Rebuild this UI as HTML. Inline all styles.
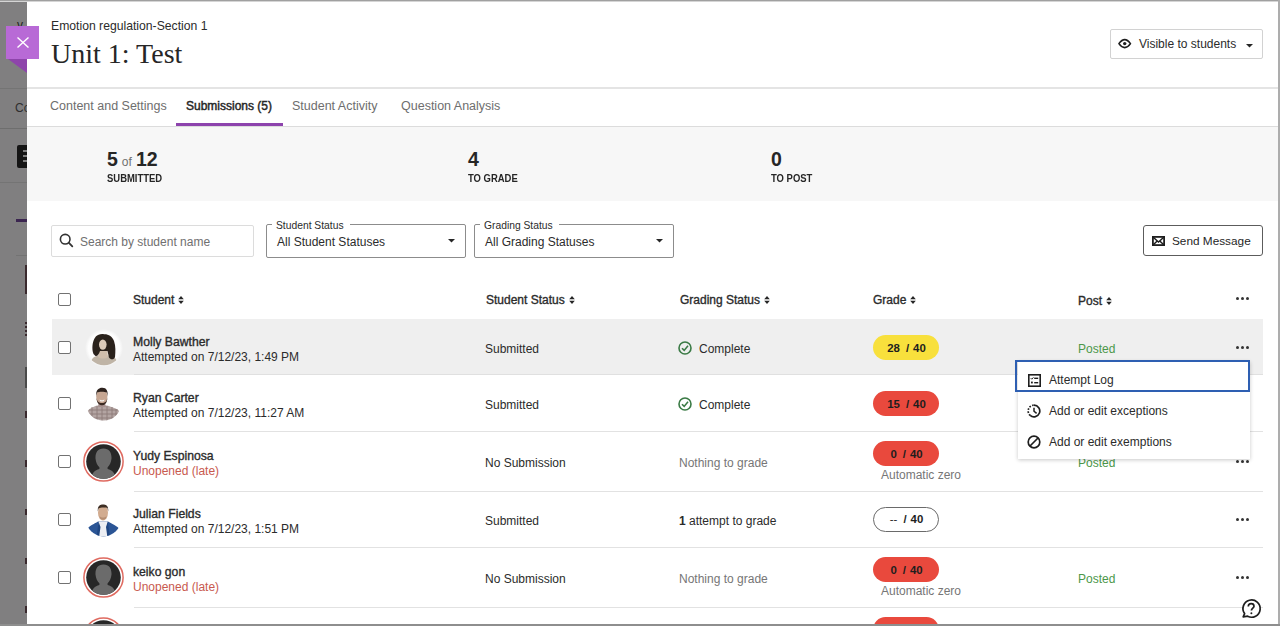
<!DOCTYPE html>
<html><head><meta charset="utf-8">
<style>
*{box-sizing:border-box;margin:0;padding:0}
html,body{width:1280px;height:626px;overflow:hidden;background:#fff;font-family:"Liberation Sans",sans-serif;color:#262626}
.a{position:absolute;white-space:nowrap}
.fl{padding:0 6px 0 4px!important}
#frame-top{position:absolute;left:0;top:0;width:1280px;height:2px;background:linear-gradient(#a0a0a0 0,#a0a0a0 50%,#d5d5d5 50%,#d5d5d5 100%)}
#leftbg{position:absolute;left:0;top:2px;width:27px;height:624px;background:#807f80}
#rightline{position:absolute;left:1278px;top:0;width:2px;height:626px;background:#adadad}
#botline{position:absolute;left:0;top:624px;width:1280px;height:2px;background:#8e8e8e}
.lm{position:absolute;left:25px;width:2px;background:#3a2a2e}
.hdr-border{position:absolute;left:27px;top:87px;width:1251px;height:2px;background:#e4e4e4}
.tab{position:absolute;top:99px;font-size:12.5px;color:#6e6e6e}
.stats{position:absolute;left:27px;top:126px;width:1251px;height:75px;background:#f7f7f7;border-top:1px solid #dcdcdc}
.num{position:absolute;font-weight:bold;font-size:19.5px;color:#262626;top:148px;line-height:22px}
.lbl{position:absolute;font-weight:bold;font-size:10.5px;color:#262626;top:172px;transform:scaleX(.9);transform-origin:0 0}
.cb{position:absolute;width:13px;height:13px;border:1.7px solid #727272;border-radius:2px;background:#fff}
.th{position:absolute;top:293px;font-size:12px;font-weight:normal;color:#2b2b2b;-webkit-text-stroke:0.35px #2b2b2b}
.th svg{display:inline-block;vertical-align:0.5px;margin-left:4px}
.td{position:absolute;font-size:12px;color:#2b2b2b}
.name{position:absolute;font-size:12.2px;font-weight:normal;color:#2b2b2b;-webkit-text-stroke:0.35px #2b2b2b}
.sub{position:absolute;font-size:12px;color:#2b2b2b}
.late{color:#c85a4f}
.sep{position:absolute;height:1px;background:#e2e2e2}
.pill{position:absolute;width:66px;height:25px;border-radius:13px;font-size:11.4px;font-weight:bold;text-align:center;line-height:26.5px;color:#1e1e1e;padding-left:1px}
.dots{position:absolute;width:14px;height:4px}
.dots i{position:absolute;top:0.2px;width:3.3px;height:3.3px;border-radius:50%;background:#333}
.posted{position:absolute;font-size:12px;color:#4c984a}
.gray{color:#767676}
.av{position:absolute}
</style></head><body>
<div id="leftbg"></div>
<div style="position:absolute;left:0;top:0;width:27px;height:626px;overflow:hidden">
<!-- left strip details -->
<div class="a" style="left:17px;top:18px;font-size:12px;color:#1f1f1f">v</div>
<div class="a" style="left:0;top:88px;width:27px;height:1px;background:#747474"></div>
<div class="a" style="left:15px;top:101px;font-size:12px;color:#2e2e2e">Co</div>
<div class="a" style="left:0;top:128px;width:27px;height:1px;background:#6e6e6e"></div>
<div class="a" style="left:17px;top:145px;width:12px;height:23px;background:#141414;border-radius:2px"></div>
<div class="a" style="left:23px;top:150px;width:4px;height:2px;background:#7e7e7e"></div>
<div class="a" style="left:23px;top:155px;width:4px;height:2px;background:#7e7e7e"></div>
<div class="a" style="left:23px;top:160px;width:4px;height:2px;background:#7e7e7e"></div>
<div class="a" style="left:0;top:182px;width:27px;height:1px;background:#747474"></div>
<div class="a" style="left:16px;top:219px;width:11px;height:3px;background:#3b2550"></div>
<div class="a" style="left:16px;top:255px;width:11px;height:1px;background:#737373"></div>
<div class="lm" style="top:265px;height:29px"></div>
<div class="lm" style="top:322px;height:1.5px"></div>
<div class="lm" style="top:326px;height:1.5px"></div>
<div class="lm" style="top:330px;height:1.5px"></div>
<div class="lm" style="top:334px;height:1.5px"></div>
<div class="lm" style="top:367px;height:21px;background:#4a4a4a"></div>
<div class="lm" style="top:411px;height:7px"></div>
<div class="lm" style="top:460px;height:7px"></div>
<div class="lm" style="top:509px;height:6px"></div>
<div class="lm" style="top:558px;height:6px"></div>
<div class="lm" style="top:606px;height:7px"></div>
</div>
<div id="frame-top"></div>

<!-- header -->
<div class="a" style="left:51px;top:19px;font-size:12.2px;color:#2b2b2b">Emotion regulation-Section 1</div>
<div class="a" style="left:51px;top:37.5px;font-size:28px;font-family:'Liberation Serif',serif;color:#262626">Unit 1: Test</div>

<!-- visible to students -->
<div class="a" style="left:1110px;top:29px;width:153px;height:30px;border:1px solid #d2d2d2;border-radius:2px"></div>
<svg class="a" style="left:1117px;top:38px" width="16" height="12" viewBox="0 0 16 12"><path d="M1.9 5.6 Q7.7 -2.4 13.5 5.6 Q7.7 13.6 1.9 5.6Z" fill="none" stroke="#1e1e1e" stroke-width="1.6" stroke-linejoin="round"/><circle cx="7.7" cy="5.6" r="1.7" fill="#1e1e1e"/></svg>
<div class="a" style="left:1139px;top:37px;font-size:12px;color:#2b2b2b">Visible to students</div>
<svg class="a" style="left:1246px;top:44px" width="7" height="4"><path d="M0 0H7L3.5 3.5Z" fill="#262626"/></svg>

<div class="hdr-border"></div>

<!-- tabs -->
<div class="tab" style="left:50px">Content and Settings</div>
<div class="tab" style="left:186px;color:#262626;font-size:12px;-webkit-text-stroke:0.45px #262626">Submissions (5)</div>
<div class="tab" style="left:292px">Student Activity</div>
<div class="tab" style="left:401px">Question Analysis</div>
<div class="a" style="left:176px;top:123px;width:107px;height:3px;background:#8d43ad"></div>

<div class="stats"></div>
<div class="num" style="left:107px">5<span style="font-weight:normal;font-size:12px;color:#707070;margin:0 4px 0 4px">of</span>12</div>
<div class="lbl" style="left:107px">SUBMITTED</div>
<div class="num" style="left:468px">4</div>
<div class="lbl" style="left:468px">TO GRADE</div>
<div class="num" style="left:771px">0</div>
<div class="lbl" style="left:771px">TO POST</div>

<!-- filters -->
<div class="a" style="left:51px;top:225px;width:203px;height:32px;border:1px solid #dcdcdc;border-radius:2px"></div>
<svg class="a" style="left:59px;top:233px" width="15" height="15" viewBox="0 0 15 15"><circle cx="6.2" cy="6.2" r="4.8" fill="none" stroke="#333" stroke-width="1.6"/><path d="M9.7 9.7L13.3 13.3" stroke="#333" stroke-width="1.8" stroke-linecap="round"/></svg>
<div class="a" style="left:80px;top:235px;font-size:12px;color:#707070">Search by student name</div>

<div class="a" style="left:266px;top:224px;width:200px;height:34px;border:1px solid #8c8c8c;border-radius:2px"></div>
<div class="a fl" style="left:272px;top:219.5px;background:#fff;padding:0 4px;font-size:10.3px;color:#2b2b2b">Student Status</div>
<div class="a" style="left:277px;top:235px;font-size:12px;color:#2b2b2b">All Student Statuses</div>
<svg class="a" style="left:448px;top:239px" width="7" height="4"><path d="M0 0H7L3.5 3.5Z" fill="#262626"/></svg>

<div class="a" style="left:474px;top:224px;width:200px;height:34px;border:1px solid #8c8c8c;border-radius:2px"></div>
<div class="a fl" style="left:480px;top:219.5px;background:#fff;padding:0 4px;font-size:10.3px;color:#2b2b2b">Grading Status</div>
<div class="a" style="left:485px;top:235px;font-size:12px;color:#2b2b2b">All Grading Statuses</div>
<svg class="a" style="left:656px;top:239px" width="7" height="4"><path d="M0 0H7L3.5 3.5Z" fill="#262626"/></svg>

<div class="a" style="left:1143px;top:225px;width:120px;height:31px;border:1px solid #5c5c5c;border-radius:3px"></div>
<svg class="a" style="left:1152px;top:235.5px" width="13" height="10" viewBox="0 0 13 10"><rect x="0.9" y="0.9" width="11.2" height="8.2" fill="none" stroke="#1e1e1e" stroke-width="1.8"/><path d="M1.2 1.2L6.5 6L11.8 1.2M1.2 8.8L5 5.2M11.8 8.8L8 5.2" fill="none" stroke="#1e1e1e" stroke-width="1.5"/></svg>
<div class="a" style="left:1172px;top:234px;font-size:11.8px;color:#262626">Send Message</div>

<!-- table header -->
<div class="cb" style="left:58px;top:293px"></div>
<div class="th" style="left:133px">Student<svg width="6" height="8" viewBox="0 0 6 8"><path d="M0.2 3.3L3 0L5.8 3.3ZM0.2 4.7L3 8L5.8 4.7Z" fill="#262626"/></svg></div>
<div class="th" style="left:486px">Student Status<svg width="6" height="8" viewBox="0 0 6 8"><path d="M0.2 3.3L3 0L5.8 3.3ZM0.2 4.7L3 8L5.8 4.7Z" fill="#262626"/></svg></div>
<div class="th" style="left:680px">Grading Status<svg width="6" height="8" viewBox="0 0 6 8"><path d="M0.2 3.3L3 0L5.8 3.3ZM0.2 4.7L3 8L5.8 4.7Z" fill="#262626"/></svg></div>
<div class="th" style="left:873px">Grade<svg width="6" height="8" viewBox="0 0 6 8"><path d="M0.2 3.3L3 0L5.8 3.3ZM0.2 4.7L3 8L5.8 4.7Z" fill="#262626"/></svg></div>
<div class="th" style="left:1078px;top:294px">Post<svg width="6" height="8" viewBox="0 0 6 8"><path d="M0.2 3.3L3 0L5.8 3.3ZM0.2 4.7L3 8L5.8 4.7Z" fill="#262626"/></svg></div>
<div class="dots" style="left:1236px;top:297px"><i style="left:0"></i><i style="left:5px"></i><i style="left:10px"></i></div>

<!-- row 1 -->
<div class="a" style="left:52px;top:319px;width:1211px;height:56px;background:#efefef"></div>
<div class="cb" style="left:58px;top:341px"></div>
<svg class="av" style="left:85px;top:329px" width="38" height="38" viewBox="0 0 38 38">
 <defs><clipPath id="c1"><circle cx="19" cy="19" r="17.2"/></clipPath><radialGradient id="g1"><stop offset="0.82" stop-color="#fdfdfd"/><stop offset="1" stop-color="#fdfdfd" stop-opacity="0"/></radialGradient><filter id="f1" x="-10%" y="-10%" width="120%" height="120%"><feGaussianBlur stdDeviation="0.45"/></filter></defs>
 <circle cx="19" cy="19" r="19" fill="url(#g1)"/>
 <g clip-path="url(#c1)">
  <path d="M5 38 C5 31 8 27.5 13 26.5 L25 26.5 C30 27.5 33 31 33 38Z" fill="#bfb4a6"/>
  <path d="M14 19 L22 19 L23 28 C20 30 16 30 13 28Z" fill="#cfbeac"/>
  <g filter="url(#f1)"><path d="M8.5 25 C6.5 20 7.5 13 9.5 9.5 C11.5 5.8 15.5 4.8 19 5.2 C23.5 5 27.5 7.5 29 12 C30.8 17 30.5 23 30 28 C29 31 25.5 31 24 28.5 L22.5 22 L15 22 C14 25 12.5 27.5 10.5 27Z" fill="#2b211c"/></g>
  <ellipse cx="17.8" cy="15.6" rx="3.8" ry="5.2" fill="#dccbba"/>
 </g>
</svg>
<div class="name" style="left:133px;top:335px">Molly Bawther</div>
<div class="sub" style="left:133px;top:350px">Attempted on 7/12/23, 1:49 PM</div>
<div class="td" style="left:485px;top:342px">Submitted</div>
<svg class="a" style="left:678px;top:341px" width="14" height="14" viewBox="0 0 14 14"><circle cx="7" cy="7" r="6" fill="none" stroke="#3a7a45" stroke-width="1.6"/><path d="M4 7.2L6.2 9.4L10 4.8" fill="none" stroke="#3a7a45" stroke-width="1.6"/></svg>
<div class="td" style="left:699px;top:342px">Complete</div>
<div class="pill" style="left:873px;top:335px;background:#f8e03c">28<span style="margin:0 4px 0 6px">/</span>40</div>
<div class="posted" style="left:1078px;top:342px">Posted</div>
<div class="dots" style="left:1236px;top:346px"><i style="left:0"></i><i style="left:5px"></i><i style="left:10px"></i></div>

<!-- row 2 -->
<div class="sep" style="left:134px;top:374px;width:1129px;background:#e0e0e0"></div>
<div class="cb" style="left:58px;top:397px"></div>
<svg class="av" style="left:86px;top:386px" width="36" height="36" viewBox="0 0 36 36">
 <defs><clipPath id="c2"><circle cx="17.5" cy="17" r="17.6"/></clipPath></defs>
 <g clip-path="url(#c2)">
  <path d="M0 36 L1 26 C2 23 7 21 11 19.5 L21 19.5 C26 21 31 22.5 33 25 L35 36Z" fill="#b3a4a2"/>
  <path d="M3 24 L32 24 M1 28 L34 28 M1 32 L34 32 M6 21 L6 36 M11 20 L11 36 M16 20 L16 36 M21 20 L21 36 M26 21 L26 36 M30 23 L30 36" stroke="#8d7a79" stroke-width="0.9"/>
  <path d="M12.5 17 L19 17 L20 21 L12 21Z" fill="#a89290"/>
  <ellipse cx="15.8" cy="10.5" rx="5.6" ry="8" fill="#c6a692"/>
  <path d="M10.2 10 C9.5 3 14 1.5 16.5 1.8 C20.5 2 22 4.5 21.6 10.5 L20.8 6.5 C18.5 5.6 13 5.6 11 6.5Z" fill="#2e231e"/>
  <path d="M10.4 11 C10.5 18 14 19.2 16 19.2 C18 19.2 21.4 18 21.4 11 C21 15.5 19 17 16 17 C13 17 10.8 15.5 10.4 11Z" fill="#3b2a22"/>
  <path d="M13.5 13.6 C15 14.6 17 14.6 18.5 13.6 L18 15 C16.5 15.8 15 15.8 14 15Z" fill="#f2eee9"/>
 </g>
</svg>
<div class="name" style="left:133px;top:391px">Ryan Carter</div>
<div class="sub" style="left:133px;top:406px">Attempted on 7/12/23, 11:27 AM</div>
<div class="td" style="left:485px;top:398px">Submitted</div>
<svg class="a" style="left:678px;top:397px" width="14" height="14" viewBox="0 0 14 14"><circle cx="7" cy="7" r="6" fill="none" stroke="#3a7a45" stroke-width="1.6"/><path d="M4 7.2L6.2 9.4L10 4.8" fill="none" stroke="#3a7a45" stroke-width="1.6"/></svg>
<div class="td" style="left:699px;top:398px">Complete</div>
<div class="pill" style="left:873px;top:391px;background:#e9493d">15<span style="margin:0 4px 0 6px">/</span>40</div>

<!-- row 3 -->
<div class="sep" style="left:134px;top:431px;width:1129px"></div>
<div class="cb" style="left:58px;top:455px"></div>
<svg class="av" style="left:83px;top:441px" width="41" height="41" viewBox="0 0 41 41">
 <defs><clipPath id="c3"><circle cx="20.5" cy="20.5" r="17.3"/></clipPath></defs>
 <circle cx="20.5" cy="20.5" r="19.6" fill="#fff" stroke="#df6a60" stroke-width="1.5"/>
 <circle cx="20.5" cy="20.5" r="17.3" fill="#272727"/>
 <g clip-path="url(#c3)" fill="#6b6b6b">
  <path d="M20.5 7.6 C26.5 7.6 28.8 12 28.5 17.5 C28.2 21.5 26.5 24.5 24.6 26.2 L24.6 28 C30 29.5 32.5 32 33 41 L8 41 C8.5 32 11 29.5 16.4 28 L16.4 26.2 C14.5 24.5 12.8 21.5 12.5 17.5 C12.2 12 14.5 7.6 20.5 7.6Z"/>
 </g>
</svg>
<div class="name" style="left:133px;top:449px">Yudy Espinosa</div>
<div class="sub late" style="left:133px;top:464px">Unopened (late)</div>
<div class="td" style="left:485px;top:456px">No Submission</div>
<div class="td gray" style="left:679px;top:456px">Nothing to grade</div>
<div class="pill" style="left:873px;top:441px;background:#e9493d">0<span style="margin:0 4px 0 6px">/</span>40</div>
<div class="td gray" style="left:881px;top:468px">Automatic zero</div>
<div class="posted" style="left:1078px;top:456px">Posted</div>
<div class="dots" style="left:1236px;top:460px"><i style="left:0"></i><i style="left:5px"></i><i style="left:10px"></i></div>

<!-- row 4 -->
<div class="sep" style="left:134px;top:491px;width:1129px"></div>
<div class="cb" style="left:58px;top:513px"></div>
<svg class="av" style="left:86px;top:502px" width="36" height="36" viewBox="0 0 36 36">
 <defs><clipPath id="c4"><circle cx="17.5" cy="17" r="17.4"/></clipPath></defs>
 <g clip-path="url(#c4)">
  <path d="M0 36 L1 27 C3 24 8 22 12 19.5 L22 19.5 C26 22 31 24 34 27 L35 36Z" fill="#2b5595"/>
  <path d="M12.5 19.5 L21.8 19.5 L21.5 36 L13 36Z" fill="#eceef3"/>
  <path d="M12.5 19.5 L14.5 25 L13 36 L10.5 36Z M21.8 19.5 L20 25 L21.5 36 L24 36Z" fill="#1f4682"/>
  <ellipse cx="17" cy="10.8" rx="5" ry="7.6" fill="#d2ac90"/>
  <path d="M11.8 9.5 C11.3 3 15 2.5 17 2.6 C20 2.6 22.6 3.5 22.2 9.5 L21.5 6.2 C19.5 5.4 14.5 5.4 12.6 6.4Z" fill="#3d2e24"/>
  <path d="M13.5 14 C15 16 19 16 20.5 14 L20 16.5 C18.5 18 15.5 18 14 16.5Z" fill="#b48d72"/>
 </g>
</svg>
<div class="name" style="left:133px;top:507px">Julian Fields</div>
<div class="sub" style="left:133px;top:522px">Attempted on 7/12/23, 1:51 PM</div>
<div class="td" style="left:485px;top:514px">Submitted</div>
<div class="td" style="left:679px;top:514px"><b>1</b> attempt to grade</div>
<div class="pill" style="left:873px;top:507px;background:#fff;border:1px solid #6a6a6a;line-height:23px"><span style="font-weight:normal">--</span><span style="margin:0 4px 0 6px">/</span>40</div>
<div class="dots" style="left:1236px;top:518px"><i style="left:0"></i><i style="left:5px"></i><i style="left:10px"></i></div>

<!-- row 5 -->
<div class="sep" style="left:134px;top:547px;width:1129px"></div>
<div class="cb" style="left:58px;top:571px"></div>
<svg class="av" style="left:83px;top:557px" width="41" height="41" viewBox="0 0 41 41">
 <defs><clipPath id="c5"><circle cx="20.5" cy="20.5" r="17.3"/></clipPath></defs>
 <circle cx="20.5" cy="20.5" r="19.6" fill="#fff" stroke="#df6a60" stroke-width="1.5"/>
 <circle cx="20.5" cy="20.5" r="17.3" fill="#272727"/>
 <g clip-path="url(#c5)" fill="#6b6b6b">
  <path d="M20.5 7.6 C26.5 7.6 28.8 12 28.5 17.5 C28.2 21.5 26.5 24.5 24.6 26.2 L24.6 28 C30 29.5 32.5 32 33 41 L8 41 C8.5 32 11 29.5 16.4 28 L16.4 26.2 C14.5 24.5 12.8 21.5 12.5 17.5 C12.2 12 14.5 7.6 20.5 7.6Z"/>
 </g>
</svg>
<div class="name" style="left:133px;top:565px">keiko gon</div>
<div class="sub late" style="left:133px;top:580px">Unopened (late)</div>
<div class="td" style="left:485px;top:572px">No Submission</div>
<div class="td gray" style="left:679px;top:572px">Nothing to grade</div>
<div class="pill" style="left:873px;top:557px;background:#e9493d">0<span style="margin:0 4px 0 6px">/</span>40</div>
<div class="td gray" style="left:881px;top:584px">Automatic zero</div>
<div class="posted" style="left:1078px;top:572px">Posted</div>
<div class="dots" style="left:1236px;top:576px"><i style="left:0"></i><i style="left:5px"></i><i style="left:10px"></i></div>

<!-- row 6 partial -->
<div class="sep" style="left:134px;top:607px;width:1129px"></div>
<svg class="av" style="left:83px;top:617px" width="41" height="41" viewBox="0 0 41 41">
 <circle cx="20.5" cy="20.5" r="19.6" fill="#fff" stroke="#df6a60" stroke-width="1.5"/>
 <circle cx="20.5" cy="20.5" r="17.3" fill="#272727"/>
</svg>
<div class="pill" style="left:873px;top:617px;background:#e9493d"></div>

<!-- help icon -->
<svg class="a" style="left:1240px;top:598px" width="22" height="22" viewBox="0 0 22 22"><path d="M3.2 18.8 L4.6 15.6 A8.6 8.6 0 1 1 7.6 18.2 Z" fill="#fff" stroke="#1e1e1e" stroke-width="1.7" stroke-linejoin="round"/><path d="M8.3 8.6 C8.3 6.8 9.6 5.7 11.2 5.7 C12.8 5.7 14 6.8 14 8.3 C14 10.1 11.4 10.4 11.4 12.6" fill="none" stroke="#1e1e1e" stroke-width="1.7"/><circle cx="11.4" cy="15.2" r="1" fill="#1e1e1e"/></svg>

<!-- menu -->
<div class="a" style="left:1018px;top:361px;width:232px;height:98px;background:#fff;box-shadow:0 1px 4px rgba(0,0,0,.22)"></div>
<div class="a" style="left:1015px;top:359.5px;width:235px;height:32.5px;border:2.4px solid #2e5fb2"></div>
<svg class="a" style="left:1027.5px;top:373.5px" width="13" height="13" viewBox="0 0 13 13"><rect x="0.8" y="0.8" width="11.4" height="11.4" fill="none" stroke="#1e1e1e" stroke-width="1.6"/><path d="M2.8 4.2L3.8 5.2L5.4 3.4" fill="none" stroke="#1e1e1e" stroke-width="1"/><rect x="6.2" y="3.6" width="4" height="1.4" fill="#1e1e1e"/><rect x="3" y="7.6" width="1.8" height="1.8" fill="#1e1e1e"/><rect x="6.2" y="8" width="4" height="1.4" fill="#1e1e1e"/></svg>
<div class="a" style="left:1049px;top:373px;font-size:12px;color:#2b2b2b">Attempt Log</div>
<svg class="a" style="left:1027px;top:403.5px" width="14" height="14" viewBox="0 0 14 14"><path d="M7 1.2 A5.8 5.8 0 1 1 3.2 11.4" fill="none" stroke="#1e1e1e" stroke-width="1.7"/><path d="M3.2 11.4 A5.8 5.8 0 0 1 7 1.2" fill="none" stroke="#1e1e1e" stroke-width="1.7" stroke-dasharray="1.6 1.4"/><path d="M7 3.8V7.2L9.6 9.4" fill="none" stroke="#1e1e1e" stroke-width="1.5"/></svg>
<div class="a" style="left:1049px;top:404px;font-size:12px;color:#2b2b2b">Add or edit exceptions</div>
<svg class="a" style="left:1027px;top:435px" width="14" height="14" viewBox="0 0 14 14"><circle cx="7" cy="7" r="5.8" fill="none" stroke="#1e1e1e" stroke-width="1.7"/><path d="M11 3L3 11" stroke="#1e1e1e" stroke-width="1.7"/></svg>
<div class="a" style="left:1049px;top:435px;font-size:12px;color:#2b2b2b">Add or edit exemptions</div>

<!-- close button -->
<div class="a" style="left:6px;top:26px;width:33px;height:33px;background:#b86ad6"></div>
<svg class="a" style="left:8px;top:59px" width="19" height="14"><path d="M0 0H19V14Z" fill="#8e45ab"/></svg>
<svg class="a" style="left:17px;top:37px" width="12" height="11" viewBox="0 0 12 11"><path d="M0.5 0.5L11.5 10.5M11.5 0.5L0.5 10.5" stroke="#fff" stroke-width="1.4"/></svg>

<div id="rightline"></div>
<div id="botline"></div>
</body></html>
